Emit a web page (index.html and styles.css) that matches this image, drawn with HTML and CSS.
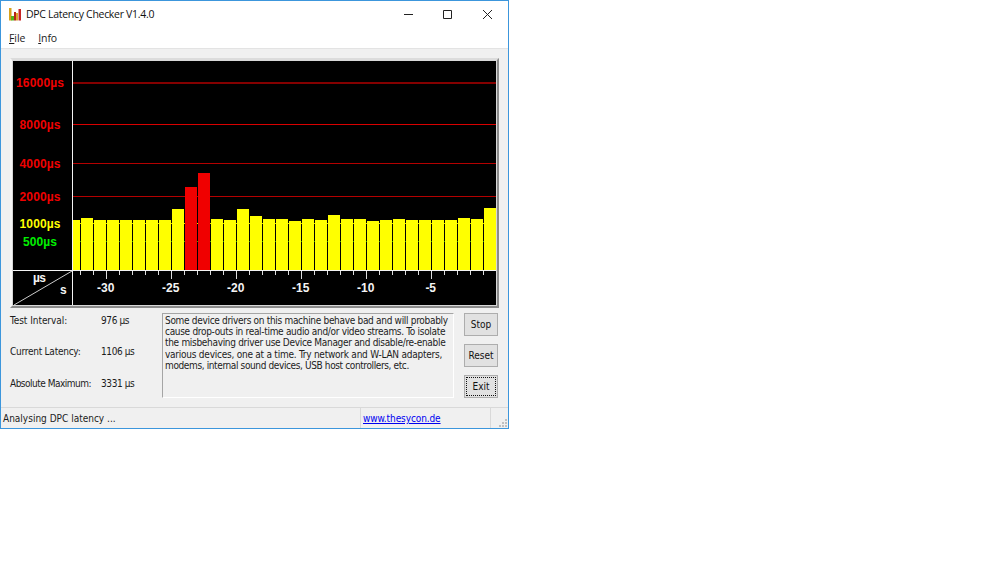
FILE: index.html
```html
<!DOCTYPE html>
<html lang="en">
<head>
    <meta charset="UTF-8">
    <title>DPC Latency Checker V1.4.0</title>
    <link rel="stylesheet" href="styles.css">
</head>
<body>
    <div class="window">
        <div class="titlebar">
            <svg class="app-icon" width="13" height="13" viewBox="0 0 13 13">
                <path fill="#d8a21c" d="M0 0h2.500v12.500H0z"/>
                <path fill="#54b51c" d="M2 8h3v4.500H2z"/>
                <path fill="#b82418" d="M5 4h2v8.500H5z"/>
                <path fill="#dca630" d="M7 5h2v7.500H7z"/>
                <path fill="#c82424" d="M9.500 1h2.500v11.500H9.500z"/>
            </svg>
            <span class="title">DPC Latency Checker V1.4.0</span>
            <svg class="controls" width="90" height="11" viewBox="0 0 90 11">
                <path d="M0 5.5h9M39.5 1.5h8v8h-8zM79 1l9 9M88 1l-9 9"/>
            </svg>
        </div>

        <div class="menubar">
            <span><u>F</u>ile</span>
            <span><u>I</u>nfo</span>
        </div>

        <div class="client">
            <div class="chart">
                <svg width="483" height="244" viewBox="0 0 483 244">
                    <path class="limit dark" d="M60 22h424"/>
                    <path class="limit" d="M60 63.5h424"/>
                    <path class="limit mid" d="M60 102.5h424"/>
                    <path class="limit mid" d="M60 135.5h424"/>
                    <path class="mark-1000" d="M60 162.5h424"/>
                    <path class="mark-500" d="M60 180.5h424"/>
                    <g id="bars"></g>
                    <g id="ticks"></g>
                    <path class="axis" d="M0 209.5h484M59.5 0v245"/>
                    <path class="diagonal" d="M1 244L59 210"/>
                    <g class="scale red">
                        <text x="3" y="26" textLength="48">16000µs</text>
                        <text x="6.500" y="68" textLength="41">8000µs</text>
                        <text x="6.500" y="107" textLength="41">4000µs</text>
                        <text x="6.500" y="140" textLength="41">2000µs</text>
                    </g>
                    <text class="scale yellow" x="6.500" y="167" textLength="41">1000µs</text>
                    <text class="scale green" x="10" y="185" textLength="34">500µs</text>
                    <text class="scale white" x="20" y="221" textLength="13">µs</text>
                    <text class="scale white" x="47" y="233">s</text>
                </svg>
            </div>

            <div class="info">
                <dl class="readings">
                    <dt class="interval">Test Interval:</dt><dd>976 µs</dd>
                    <dt class="current">Current Latency:</dt><dd>1106 µs</dd>
                    <dt class="maximum">Absolute Maximum:</dt><dd class="maximum-value">3331 µs</dd>
                </dl>
                <div class="message">
                    <div>Some device drivers on this machine behave bad and will probably</div>
                    <div>cause drop-outs in real-time audio and/or video streams. To isolate</div>
                    <div>the misbehaving driver use Device Manager and disable/re-enable</div>
                    <div class="loose">various devices, one at a time. Try network and W-LAN adapters,</div>
                    <div class="tight">modems, internal sound devices, USB host controllers, etc.</div>
                </div>
                <div class="buttons">
                    <button>Stop</button>
                    <button>Reset</button>
                    <button class="focused">Exit</button>
                </div>
            </div>
        </div>

        <div class="statusbar">
            <span class="status">Analysing DPC latency ...</span>
            <span class="link"><a href="#">www.thesycon.de</a></span>
            <svg class="grip" width="8" height="8" viewBox="0 0 8 8">
                <path d="M6 0h2v2H6zM3 3h2v2H3zM6 3h2v2H6zM0 6h2v2H0zM3 6h2v2H3zM6 6h2v2H6z"/>
            </svg>
        </div>
    </div>

    <script>
        const NS = 'http://www.w3.org/2000/svg';
        const STEP = 13.02;
        const FIRST = 67.3;
        const BASE = 209;

        // Bar heights in pixels, oldest sample first
        const samples = [50, 52, 50, 50, 50, 50, 50, 50, 61, 83, 97, 51, 50, 61, 54, 51, 51,
            49, 51, 50, 55, 51, 51, 49, 50, 51, 50, 50, 50, 50, 52, 51, 62];

        function add(parent, name, attrs, text) {
            const el = document.createElementNS(NS, name);
            for (const key in attrs) el.setAttribute(key, attrs[key]);
            if (text) el.textContent = text;
            document.getElementById(parent).appendChild(el);
        }

        samples.forEach((height, i) => {
            const right = Math.floor(FIRST + i * STEP);
            const left = i === 0 ? 60 : Math.floor(FIRST + (i - 1) * STEP) + 1;
            add('bars', 'rect', {
                class: height > 80 ? 'bar over' : 'bar',
                x: left, y: BASE - height, width: right - left, height: height
            });
        });

        // One tick per second, a longer labelled one every five
        for (let s = 32; s >= 1; s--) {
            const x = Math.floor(FIRST + (32 - s) * STEP) + 0.5;
            const major = s % 5 === 0;
            add('ticks', 'path', { class: 'tick', d: `M${x} 210v${major ? 8 : 4}` });
            if (major) {
                const width = s > 5 ? 17.5 : 10.5;
                add('ticks', 'text', { class: 'scale white', x: x - 9.5 + (s > 5 ? 0 : 3.5), y: 231, textLength: width }, '-' + s);
            }
        }
    </script>
</body>
</html>
```
FILE: styles.css
```css
* {
    box-sizing: border-box;
}

body {
    margin: 0;
    background: #fff;
    color: #1c1c1c;
    font-family: "DejaVu Sans Condensed", "DejaVu Sans", sans-serif;
    font-stretch: condensed;
    font-size: 10px;
}

.window {
    display: flex;
    flex-direction: column;
    width: 509px;
    height: 429px;
    border: 1px solid #3c96dc;
    background: #f0f0f0;
}

.titlebar {
    display: flex;
    align-items: center;
    height: 26px;
    padding: 0 14px 0 8px;
    background: #fff;
    font-family: "Open Sans", "Noto Sans", sans-serif;
    font-stretch: normal;
}

.title {
    margin-left: 4px;
    font-size: 10.5px;
    letter-spacing: -0.3px;
    color: #111;
}

.controls {
    margin-left: auto;
    fill: none;
    stroke: #222;
}

.menubar {
    display: flex;
    gap: 13px;
    height: 22px;
    padding-left: 8px;
    background: #fff;
    border-bottom: 1px solid #e3e3e3;
    font-family: "Open Sans", "Noto Sans", sans-serif;
    font-stretch: normal;
    font-size: 10.5px;
    letter-spacing: -0.1px;
    line-height: 22px;
}

.client {
    flex: 1;
    padding: 9px 9px 0;
}

.chart {
    width: 489px;
    height: 250px;
    border: 2px solid #fff;
    border-top-color: #dcdcdc;
    border-left-color: #f8f8f8;
    border-right-color: #8b8b8b;
    border-bottom-color: #8b8b8b;
    background: #d8d8d8;
    padding: 1px;
    padding-right: 0;
}

.chart svg {
    display: block;
    background: #000;
}

.limit {
    stroke: #d80000;
}

.limit.mid {
    stroke: #b40000;
}

.limit.dark {
    stroke: #840000;
    stroke-width: 2;
}

.bar {
    fill: #ff0;
}

.bar.over {
    fill: #f00000;
}

.mark-1000 {
    stroke: #e0e000;
}

.mark-500 {
    stroke: #3c9c00;
}

.axis {
    stroke: #f4f4f4;
}

.diagonal {
    stroke: #ccc;
}

.tick {
    stroke: #ddd;
}

.scale {
    font-family: "Liberation Sans", Arial, sans-serif;
    font-size: 12px;
    font-weight: bold;
    font-stretch: normal;
}

.red {
    fill: #f00000;
}

.yellow {
    fill: #ff0;
}

.green {
    fill: #00f000;
}

.white {
    fill: #f4f4f4;
}

.info {
    display: flex;
    padding-top: 5px;
}

.readings {
    display: grid;
    flex: none;
    grid-template-columns: 91px 61px;
    grid-auto-rows: 31.300px;
    align-content: start;
    margin: 0;
    line-height: 16px;
    white-space: nowrap;
}

.readings dd {
    margin: 0;
    letter-spacing: -0.4px;
}

.interval {
    letter-spacing: -0.05px;
}

.current {
    letter-spacing: -0.25px;
}

.maximum {
    letter-spacing: -0.5px;
}

.message {
    flex: none;
    width: 292px;
    height: 85px;
    padding: 1px 0 0 2px;
    border: 1px solid #fff;
    border-top-color: #a5a5a5;
    border-left-color: #a5a5a5;
    letter-spacing: -0.31px;
    line-height: 11.200px;
    white-space: nowrap;
}

.message .loose {
    letter-spacing: -0.24px;
}

.message .tight {
    letter-spacing: -0.38px;
}

.buttons {
    display: flex;
    flex-direction: column;
    gap: 8px;
    margin-left: 10px;
}

.buttons button {
    width: 34px;
    height: 23px;
    padding: 0;
    border: 1px solid #adadad;
    background: #e1e1e1;
    color: #111;
    font: inherit;
}

.buttons .focused {
    outline: 1px dotted #111;
    outline-offset: -3px;
}

.statusbar {
    display: flex;
    height: 21px;
    border-top: 1px solid #d9d9d9;
    line-height: 21px;
}

.status {
    width: 360px;
    padding-left: 2px;
    border-right: 1px solid #d9d9d9;
}

.link {
    width: 130px;
    padding-left: 2px;
    border-right: 1px solid #d9d9d9;
    letter-spacing: -0.1px;
}

.link a {
    color: #0000f0;
}

.grip {
    margin: 11px 0 0 8px;
    fill: #c0c0c0;
}
```
